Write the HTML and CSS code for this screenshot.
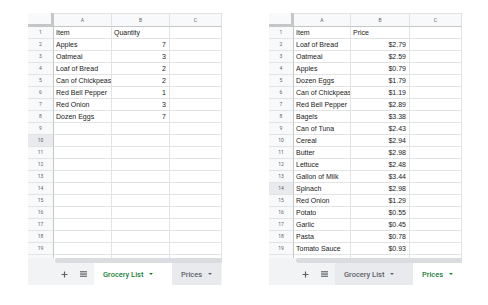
FILE: index.html
```html
<!DOCTYPE html>
<html lang="en">

<head>
    <meta charset="UTF-8">
    <meta name="viewport" content="width=device-width, initial-scale=1.0">
    <title>Grocery List</title>
    <link rel="stylesheet" href="styles.css">
</head>

<body>
    <main class="pair">
        <section class="book">
            <div class="sheet sheet-left" id="grocery"></div>
            <div class="scroll"><div class="scroll-corner"></div><div class="scroll-thumb"></div></div>
            <div class="tabbar">
                <span class="tool">
                    <svg width="7" height="7" viewBox="0 0 7 7"><path d="M3.5 0.5v6M0.5 3.5h6" stroke="#5f6368" stroke-width="1.2" /></svg>
                </span>
                <span class="tool">
                    <svg width="7" height="6" viewBox="0 0 7 6"><path d="M0 0.6h7M0 2.2h7M0 3.8h7M0 5.4h7" stroke="#5f6368" stroke-width="0.9" /></svg>
                </span>
                <span class="tab tab-active tab-wide">Grocery List <i class="arrow"></i></span>
                <span class="tab">Prices <i class="arrow"></i></span>
            </div>
        </section>

        <section class="book">
            <div class="sheet sheet-right" id="prices"></div>
            <div class="scroll"><div class="scroll-corner"></div><div class="scroll-thumb"></div></div>
            <div class="tabbar">
                <span class="tool">
                    <svg width="7" height="7" viewBox="0 0 7 7"><path d="M3.5 0.5v6M0.5 3.5h6" stroke="#5f6368" stroke-width="1.2" /></svg>
                </span>
                <span class="tool">
                    <svg width="7" height="6" viewBox="0 0 7 6"><path d="M0 0.6h7M0 2.2h7M0 3.8h7M0 5.4h7" stroke="#5f6368" stroke-width="0.9" /></svg>
                </span>
                <span class="tab tab-wide">Grocery List <i class="arrow"></i></span>
                <span class="tab tab-active">Prices <i class="arrow"></i></span>
            </div>
        </section>
    </main>

    <script>
        var grocery = [
            ["Item", "Quantity"],
            ["Apples", 7],
            ["Oatmeal", 3],
            ["Loaf of Bread", 2],
            ["Can of Chickpeas", 2],
            ["Red Bell Pepper", 1],
            ["Red Onion", 3],
            ["Dozen Eggs", 7]
        ];

        var prices = [
            ["Item", "Price"],
            ["Loaf of Bread", "$2.79"],
            ["Oatmeal", "$2.59"],
            ["Apples", "$0.79"],
            ["Dozen Eggs", "$1.79"],
            ["Can of Chickpeas", "$1.19"],
            ["Red Bell Pepper", "$2.89"],
            ["Bagels", "$3.38"],
            ["Can of Tuna", "$2.43"],
            ["Cereal", "$2.94"],
            ["Butter", "$2.98"],
            ["Lettuce", "$2.48"],
            ["Gallon of Milk", "$3.44"],
            ["Spinach", "$2.98"],
            ["Red Onion", "$1.29"],
            ["Potato", "$0.55"],
            ["Garlic", "$0.45"],
            ["Pasta", "$0.78"],
            ["Tomato Sauce", "$0.93"]
        ];

        function cell(cls, text) {
            var d = document.createElement("div");
            d.className = "cell " + cls;
            d.textContent = text;
            return d;
        }

        function drawSheet(id, data, hoverRow) {
            var sheet = document.querySelector("#" + id);
            sheet.appendChild(cell("corner", ""));
            ["A", "B", "C"].forEach(function (l) {
                sheet.appendChild(cell("colhead", l));
            });

            for (var r = 1; r <= 19; r++) {
                var row = data[r - 1] || ["", ""];
                sheet.appendChild(cell(r == hoverRow ? "rowhead rowhead-on" : "rowhead", r));
                sheet.appendChild(cell("", row[0]));
                sheet.appendChild(cell(r > 1 ? "num" : "", row[1]));
                sheet.appendChild(cell("", ""));
            }

            // the row cut off under 19
            sheet.appendChild(cell("rowhead stub", ""));
            sheet.appendChild(cell("stub", ""));
            sheet.appendChild(cell("stub", ""));
            sheet.appendChild(cell("stub", ""));
        }

        drawSheet("grocery", grocery, 10);
        drawSheet("prices", prices, 14);
    </script>
</body>

</html>
```

FILE: styles.css
```css
body {
    margin: 0;
    background: #fff;
    font-family: "Liberation Sans", Arial, sans-serif;
}

.pair {
    display: flex;
    gap: 47px;
    padding: 13px 0 0 28px;
}

.book {
    display: flex;
    flex-direction: column;
}

.sheet {
    display: grid;
    grid-template-rows: 14px repeat(19, 12px) 3px;
}

.sheet-left {
    grid-template-columns: 26px 58px 58px 52px;
}

.sheet-right {
    grid-template-columns: 25px 57px 59px 52px;
}

.cell {
    box-sizing: border-box;
    border-right: 1px solid #e2e3e3;
    border-bottom: 1px solid #e2e3e3;
    font-size: 7px;
    line-height: 11px;
    color: #222;
    padding: 0 2px;
    white-space: nowrap;
    overflow: hidden;
}

.num {
    text-align: right;
    padding-right: 3px;
}

.corner {
    background: #f8f9fa;
    border-right: 3px solid #c4c7c5;
    border-bottom: 3px solid #c4c7c5;
}

.colhead {
    background: #f8f9fa;
    border-top: 1px solid #e2e3e3;
    border-bottom-color: #c4c7c5;
    font-family: Roboto, sans-serif;
    font-size: 5px;
    line-height: 13px;
    color: #5f6368;
    text-align: center;
}

.rowhead {
    background: #f8f9fa;
    font-family: Roboto, sans-serif;
    font-size: 5px;
    color: #5f6368;
    text-align: center;
    border-right-color: #c4c7c5;
}

.rowhead-on {
    background: #e8eaed;
}

.sheet > .stub {
    border-bottom: 0;
}

.scroll {
    display: flex;
    height: 5px;
}

.scroll-corner {
    width: 27px;
    background: #f1f3f4;
}

.scroll-thumb {
    flex: 1;
    background: #dadce0;
    border-radius: 2px 0 0 2px;
}

.tabbar {
    display: flex;
    align-items: center;
    height: 22px;
    background: #f1f3f4;
    overflow: hidden;
    padding-left: 27px;
    font-family: Roboto, sans-serif;
}

.tool {
    display: flex;
    justify-content: center;
    width: 19px;
}

.tab {
    display: flex;
    align-items: center;
    flex-shrink: 0;
    height: 22px;
    padding: 0 9px;
    background: #e8eaed;
    color: #5f6368;
    font-size: 7.5px;
    font-weight: 500;
    white-space: nowrap;
}

.tab-wide {
    width: 78px;
    box-sizing: border-box;
    margin-left: 1px;
}

.tab-active {
    background: #fff;
    color: #188038;
}

.arrow {
    margin-left: 6px;
    width: 0;
    height: 0;
    border-left: 2.5px solid transparent;
    border-right: 2.5px solid transparent;
    border-top: 2.5px solid currentColor;
}
```
